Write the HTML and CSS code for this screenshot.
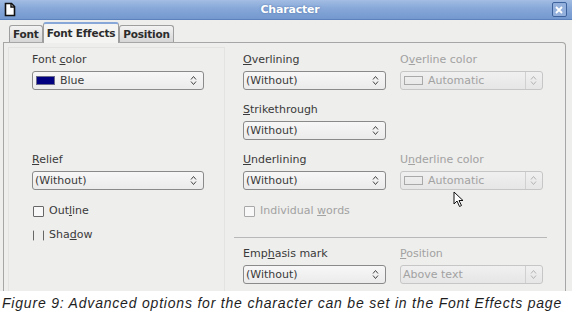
FILE: index.html
```html
<!DOCTYPE html>
<html lang="en">
<head>
    <meta charset="UTF-8">
    <title>Character</title>
    <link rel="stylesheet" href="styles.css">
</head>
<body>
    <div class="window">
        <header class="titlebar">
            <svg class="app-icon" width="12" height="15" viewBox="0 0 12 15">
                <path d="M1.5 1.5 H7.5 L10.5 4.5 V13.5 H1.5 Z" fill="#fff" stroke="#111" stroke-width="1.6"/>
                <path d="M7 1.5 V5 H10.5" fill="none" stroke="#111" stroke-width="1.4"/>
            </svg>
            <span class="title">Character</span>
            <span class="close-btn">
                <svg width="8" height="8" viewBox="0 0 8 8">
                    <path d="M1 1 L7 7 M7 1 L1 7" stroke="#fff" stroke-width="1.8"/>
                </svg>
            </span>
        </header>

        <div class="dialog">
            <div class="tabs">
                <div class="tab">Font</div>
                <div class="tab active">Font Effects</div>
                <div class="tab">Position</div>
            </div>

            <div class="panel">
                <div class="left-box">
                    <div class="field">
                        <span class="label">Font <u>c</u>olor</span>
                        <div class="select">
                            <span class="swatch blue"></span>
                            <span class="value">Blue</span>
                            <span class="spin"><svg width="7" height="11" viewBox="0 0 7 11"><path d="M1 4.5 L3.5 1.5 L6 4.5 M1 6.5 L3.5 9.5 L6 6.5" fill="none" stroke="#444" stroke-width="1"/></svg></span>
                        </div>
                    </div>
                    <div class="field relief">
                        <span class="label"><u>R</u>elief</span>
                        <div class="select">
                            <span class="value">(Without)</span>
                            <span class="spin"><svg width="7" height="11" viewBox="0 0 7 11"><path d="M1 4.5 L3.5 1.5 L6 4.5 M1 6.5 L3.5 9.5 L6 6.5" fill="none" stroke="#444" stroke-width="1"/></svg></span>
                        </div>
                    </div>
                    <div class="check outline"><span class="box"></span><span>Out<u>l</u>ine</span></div>
                    <div class="check"><span class="box half"></span><span>Sha<u>d</u>ow</span></div>
                </div>

                <div class="right-area">
                    <div class="grid">
                        <div class="field">
                            <span class="label"><u>O</u>verlining</span>
                            <div class="select">
                                <span class="value">(Without)</span>
                                <span class="spin"><svg width="7" height="11" viewBox="0 0 7 11"><path d="M1 4.5 L3.5 1.5 L6 4.5 M1 6.5 L3.5 9.5 L6 6.5" fill="none" stroke="#444" stroke-width="1"/></svg></span>
                            </div>
                        </div>
                        <div class="field disabled">
                            <span class="label">O<u>v</u>erline color</span>
                            <div class="select">
                                <span class="swatch"></span>
                                <span class="value">Automatic</span>
                                <span class="spin sep"><svg width="7" height="11" viewBox="0 0 7 11"><path d="M1 4.5 L3.5 1.5 L6 4.5 M1 6.5 L3.5 9.5 L6 6.5" fill="none" stroke="#b4b4b4" stroke-width="1"/></svg></span>
                            </div>
                        </div>
                        <div class="field">
                            <span class="label"><u>S</u>trikethrough</span>
                            <div class="select">
                                <span class="value">(Without)</span>
                                <span class="spin"><svg width="7" height="11" viewBox="0 0 7 11"><path d="M1 4.5 L3.5 1.5 L6 4.5 M1 6.5 L3.5 9.5 L6 6.5" fill="none" stroke="#444" stroke-width="1"/></svg></span>
                            </div>
                        </div>
                        <div></div>
                        <div class="field">
                            <span class="label"><u>U</u>nderlining</span>
                            <div class="select">
                                <span class="value">(Without)</span>
                                <span class="spin"><svg width="7" height="11" viewBox="0 0 7 11"><path d="M1 4.5 L3.5 1.5 L6 4.5 M1 6.5 L3.5 9.5 L6 6.5" fill="none" stroke="#444" stroke-width="1"/></svg></span>
                            </div>
                        </div>
                        <div class="field disabled">
                            <span class="label">U<u>n</u>derline color</span>
                            <div class="select">
                                <span class="swatch"></span>
                                <span class="value">Automatic</span>
                                <span class="spin sep"><svg width="7" height="11" viewBox="0 0 7 11"><path d="M1 4.5 L3.5 1.5 L6 4.5 M1 6.5 L3.5 9.5 L6 6.5" fill="none" stroke="#b4b4b4" stroke-width="1"/></svg></span>
                            </div>
                        </div>
                    </div>

                    <div class="check disabled words"><span class="box"></span><span>Individual <u>w</u>ords</span></div>

                    <div class="separator"></div>

                    <div class="grid">
                        <div class="field">
                            <span class="label">Emp<u>h</u>asis mark</span>
                            <div class="select">
                                <span class="value">(Without)</span>
                                <span class="spin"><svg width="7" height="11" viewBox="0 0 7 11"><path d="M1 4.5 L3.5 1.5 L6 4.5 M1 6.5 L3.5 9.5 L6 6.5" fill="none" stroke="#444" stroke-width="1"/></svg></span>
                            </div>
                        </div>
                        <div class="field disabled">
                            <span class="label"><u>P</u>osition</span>
                            <div class="select">
                                <span class="value">Above text</span>
                                <span class="spin sep"><svg width="7" height="11" viewBox="0 0 7 11"><path d="M1 4.5 L3.5 1.5 L6 4.5 M1 6.5 L3.5 9.5 L6 6.5" fill="none" stroke="#b4b4b4" stroke-width="1"/></svg></span>
                            </div>
                        </div>
                    </div>
                </div>
            </div>
        </div>

        <p class="caption">Figure 9: Advanced options for the character can be set in the Font Effects page</p>

        <!-- mouse pointer over the dialog -->
        <svg class="pointer" width="12" height="17" viewBox="0 0 12 17">
            <path d="M1 1 V13 L4 10 L6.5 15.5 L8.5 14.5 L6 9.5 H10 Z" fill="#fff" stroke="#111" stroke-width="1" stroke-linejoin="round"/>
        </svg>
    </div>
</body>
</html>
```

FILE: styles.css
```css
* {
    margin: 0;
    padding: 0;
    box-sizing: border-box;
}

body {
    font-family: 'DejaVu Sans', 'Liberation Sans', sans-serif;
    font-size: 11px;
    color: #3a3a3a;
    background: #fff;
}

.window {
    position: relative;
    width: 572px;
    height: 314px;
    overflow: hidden;
}

/* Title bar */
.titlebar {
    height: 20px;
    display: flex;
    align-items: center;
    justify-content: space-between;
    padding: 0 5px 0 4px;
    background: linear-gradient(to bottom, #a3bde3 0%, #86a7d8 45%, #7499cf 100%);
    border-bottom: 1px solid #5b82bd;
}

.app-icon {
    display: block;
}

.title {
    font-weight: bold;
    font-size: 11px;
    letter-spacing: -0.2px;
    color: #fff;
    text-shadow: 0 0 2px #4a6ea6;
    margin-left: 12px;
}

.close-btn {
    width: 15px;
    height: 15px;
    border: 1px solid #3e639c;
    border-radius: 2px;
    background: #93b0dc;
    display: flex;
    align-items: center;
    justify-content: center;
}

/* Dialog body */
.dialog {
    background: #eeeeec;
    height: 271px;
}

.tabs {
    height: 22px;
    display: flex;
    align-items: flex-end;
    padding-left: 9px;
}

.tab {
    height: 17px;
    padding: 0 3px;
    border: 1px solid #9e9e9e;
    border-bottom: none;
    border-radius: 3px 3px 0 0;
    background: linear-gradient(to bottom, #f3f3f3, #d6d6d6);
    font-weight: bold;
    font-size: 10.5px;
    letter-spacing: -0.2px;
    line-height: 16px;
    color: #2c2c2c;
}

.tab.active {
    height: 21px;
    margin-bottom: -1px;
    border-top: 2px solid #86a7d8;
    background: #f4f4f2;
    line-height: 18px;
    position: relative;
    z-index: 1;
}

.panel {
    margin: 0 6px 0 3px;
    height: 249px;
    border: 1px solid #a6a6a6;
    border-bottom: none;
    border-radius: 0 4px 0 0;
    display: flex;
}

.left-box {
    margin: 4px 0 0 4px;
    width: 217px;
    border: 1px solid #e3e3e1;
    border-bottom: none;
    padding: 5px 0 0 23px;
}

.right-area {
    margin-left: 9px;
    width: 313px;
    padding: 10px 0 0 9px;
}

.grid {
    display: grid;
    grid-template-columns: 143px 143px;
    column-gap: 14px;
    row-gap: 13px;
}

.field .label {
    display: block;
    height: 14px;
    line-height: 14px;
    margin-bottom: 4px;
    white-space: nowrap;
}

.left-box .field {
    width: 172px;
}

.field.relief {
    margin-top: 63px;
}

.select {
    height: 19px;
    border: 1px solid #8a8a8a;
    border-radius: 3px;
    background: linear-gradient(to bottom, #f7f7f7, #ebebeb);
    display: flex;
    align-items: center;
    padding-left: 2px;
    position: relative;
}

.select .value {
    flex: 1;
    line-height: 17px;
}

.swatch {
    width: 19px;
    height: 9px;
    margin: 0 5px 0 1px;
    border: 1px solid #a9a9a9;
}

.swatch.blue {
    background: #000080;
    border-color: #6a6a8a;
}

.spin {
    width: 14px;
    height: 17px;
    display: flex;
    align-items: center;
    justify-content: center;
    margin-right: 3px;
}

.spin.sep {
    border-left: 1px solid #d0d0d0;
    margin-right: 1px;
    width: 16px;
}

.disabled {
    color: #a2a2a2;
}

.disabled .select {
    border-color: #c6c6c6;
    background: linear-gradient(to bottom, #f0f0f0, #e6e6e6);
}

/* Checkboxes */
.check {
    display: flex;
    align-items: center;
    height: 12px;
    line-height: 12px;
    margin-top: 12px;
    white-space: pre;
}

.check.outline {
    margin-top: 15px;
}

.check .box {
    width: 11px;
    height: 11px;
    border: 1px solid #676767;
    border-radius: 1px;
    background: #f8f8f8;
    margin: 0 5px 0 1px;
}

.check .box.half {
    border-top-color: transparent;
    border-bottom-color: transparent;
    background: transparent;
}

.check.disabled .box {
    border-color: #a8a8a8;
}

.check.words {
    margin-top: 15px;
}

.separator {
    height: 1px;
    background: #b8b8b8;
    margin: 20px 0 9px -9px;
}

/* Caption */
.caption {
    font-family: 'Liberation Sans', Arial, sans-serif;
    font-style: italic;
    font-size: 14px;
    letter-spacing: 0.8px;
    color: #1e1e1e;
    padding: 4px 0 0 2px;
    line-height: 17px;
    white-space: nowrap;
}

.pointer {
    position: absolute;
    left: 453px;
    top: 191px;
}
```
